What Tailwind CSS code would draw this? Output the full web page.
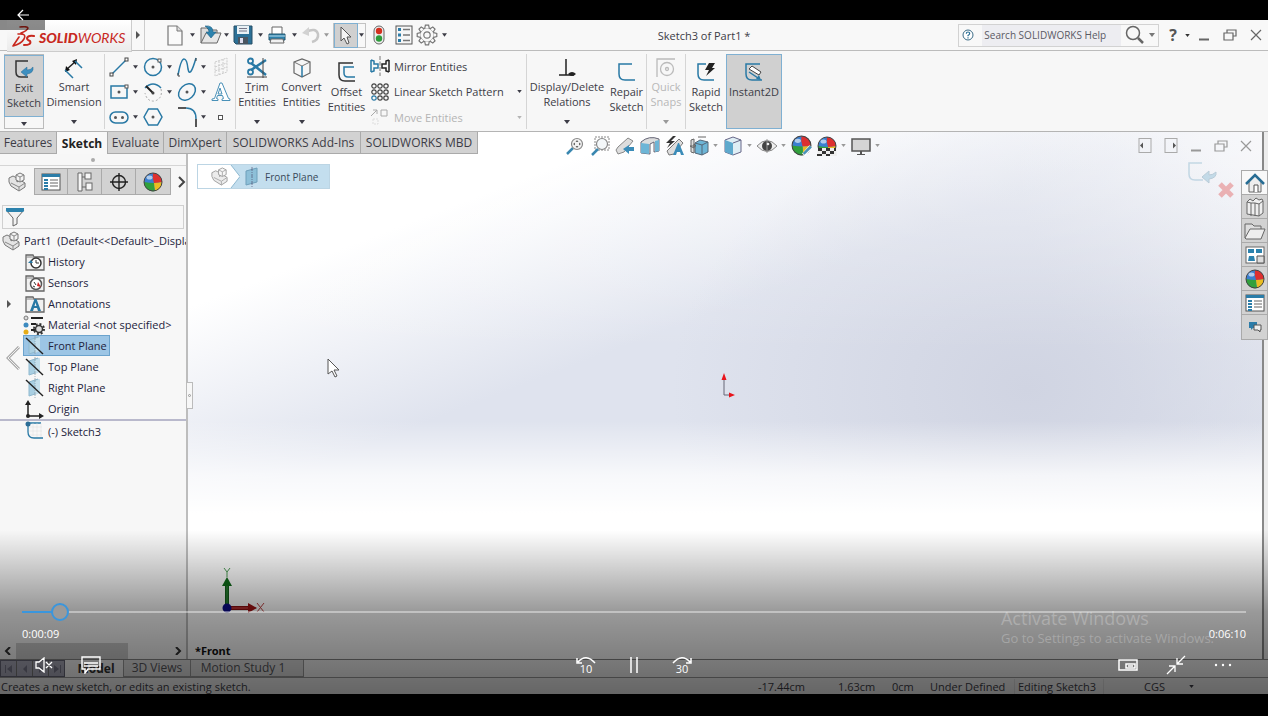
<!DOCTYPE html>
<html lang="en">
<head>
    <meta charset="UTF-8">
    <meta name="viewport" content="width=device-width, initial-scale=1.0">
    <title>SOLIDWORKS - Sketch3 of Part1</title>
    <script src="https://cdn.jsdelivr.net/npm/@tailwindcss/browser@4"></script>
</head>
<body class="bg-black">
    <!-- Shared icons -->
    <svg class="hidden">
        <symbol id="caret" viewBox="0 0 6 4"><path d="M0 0h6L3 4z" fill="currentColor"/></symbol>
        <symbol id="part" viewBox="0 0 20 20">
            <path d="M2 6l4-2 4 2v4l3-2 5 3v4l-6 4-8-5-2-4z" fill="#e4e4e4" stroke="#777" stroke-linejoin="round"/>
            <path d="M9 3l4-2 4 2v5l-4 2-4-2z" fill="#f4f4f4" stroke="#777" stroke-linejoin="round"/>
            <path d="M9 3l4 2 4-2M13 5v5M4 11l8 4 6-4M12 15v4" fill="none" stroke="#888"/>
        </symbol>
        <symbol id="plane" viewBox="0 0 20 20">
            <path d="M4 4l9-3v14l-9 3z" fill="#a9cfe2" stroke="#8fb9cf"/>
            <path d="M10 3l5-2v14l-5 2z" fill="#c4dfec"/>
            <path d="M10 0v20" stroke="#8899a5" stroke-width=".7" stroke-dasharray="4 1 1 1"/>
            <path d="M1 2l17 16" stroke="#222" stroke-width="1.4"/>
        </symbol>
        <symbol id="ball" viewBox="0 0 20 20">
            <circle cx="10" cy="10" r="9" fill="#3b7fd0"/>
            <path d="M10 1a9 9 0 0 1 9 9q-4 1-8 1Q9 6 10 1z" fill="#dd3030"/>
            <path d="M19 10a9 9 0 0 1-7 9q-1-4-1-8 4 0 8-1z" fill="#e9bd22"/>
            <path d="M1 10q5 1 10 1 0 4 1 8A9 9 0 0 1 1 10z" fill="#31a03c"/>
            <circle cx="10" cy="10" r="9" fill="none" stroke="#444"/>
            <ellipse cx="6.5" cy="5.5" rx="3" ry="2" fill="#fff" opacity=".6"/>
        </symbol>
        <symbol id="folder" viewBox="0 0 20 18">
            <path d="M1 17V2h7l1 2h10v13z" fill="#f1f1f1" stroke="#666" stroke-width="1.3"/>
            <path d="M1 4h9" stroke="#888"/>
        </symbol>
        <symbol id="proplist" viewBox="0 0 20 18">
            <rect x="1" y="1" width="18" height="16" fill="#fff" stroke="#555"/>
            <path d="M1 2.5h18" stroke="#2b7da8" stroke-width="3"/>
            <path d="M3 7h4M3 10h4M3 13h4M3 16h4" stroke="#2b7da8" stroke-width="2"/>
            <path d="M9 7h8M9 10h8M9 13h8" stroke="#666" stroke-width="1.2"/>
        </symbol>
        <symbol id="tooth" viewBox="0 0 22 22"><path d="M8.700 4.500L9.400 1.200h3.200l.700 3.300" fill="#f8f8f8" stroke="#777" stroke-width="1.200"/></symbol>
        <symbol id="restore" viewBox="0 0 14 12">
            <path d="M4 4V1h9v6h-3M1 4h9v7H1z" fill="none" stroke="currentColor" stroke-width="1.2"/>
        </symbol>
        <symbol id="close" viewBox="0 0 12 12"><path d="M1 1l10 10M11 1L1 11" stroke="currentColor" stroke-width="1.2"/></symbol>
        <symbol id="minus" viewBox="0 0 12 12"><path d="M1 10.5h10" stroke="currentColor" stroke-width="2"/></symbol>
    </svg>

    <div class="relative flex h-screen flex-col overflow-hidden bg-black font-['Open_Sans',sans-serif] text-[11px] leading-[15px] text-[#3c3c46]">
        <div class="h-5 shrink-0"></div>

        <!-- Title bar -->
        <header class="flex h-[31px] shrink-0 items-center border-b border-[#bcbcbc] bg-[#f8f8f8]">
            <div class="relative z-10 ml-[7px] mt-[2px] flex h-8 w-[125px] items-center border-r border-b border-[#ccc] bg-gradient-to-b from-white to-[#ebebeb] pt-1 pl-1">
                <svg class="h-6 w-7 shrink-0" viewBox="0 0 28 24" fill="none" stroke="#c8281e" stroke-width="1.6" stroke-linecap="round" stroke-linejoin="round">
                    <path d="M9 1q7-1 8 1-1 3-7 5M7 8q9-1 6 5-3 5-11 7l6-9"/>
                    <path d="M23 10q-6-1-7 2 0 2 3 3 2 4-6 4" stroke-width="2"/>
                </svg>
                <span class="font-['Lato',sans-serif] text-[14px] leading-4 text-[#c8281e] italic"><b class="font-black">SOLID</b>WORKS</span>
            </div>
            <button class="flex h-full w-[13px] items-center justify-center border-r border-[#ccc]" aria-label="Menu">
                <svg class="h-2 w-1" viewBox="0 0 4 8"><path d="M0 0l4 4-4 4z" fill="#555"/></svg>
            </button>
            <nav class="ml-5 flex items-center gap-1">
                <button class="flex w-[30px] items-center justify-between" aria-label="New">
                    <svg class="h-[21px] w-5" viewBox="0 0 20 21"><path d="M3 1h9l5 5v14H3z" fill="#fafafa" stroke="#777" stroke-width="1.2"/><path d="M12 1v5h5" fill="#ddd" stroke="#777"/></svg>
                    <svg class="h-1 w-[5px]"><use href="#caret"/></svg>
                </button>
                <button class="flex w-[30px] items-center justify-between" aria-label="Open">
                    <svg class="h-5 w-6" viewBox="0 0 24 20"><path d="M2 18V3h6l2 2h8v4" fill="#ddd" stroke="#666"/><path d="M2 18L7 8h15l-4 10z" fill="#e6e6e6" stroke="#666"/><path d="M6 1q8-1 8 6h3l-5 6-5-6h3q0-4-4-6z" fill="#2c82ad" stroke="#1d5f84" stroke-width=".6"/></svg>
                    <svg class="h-1 w-[5px]"><use href="#caret"/></svg>
                </button>
                <button class="flex w-[30px] items-center justify-between" aria-label="Save">
                    <svg class="h-5 w-5" viewBox="0 0 20 20"><path d="M1 1h18v18H3l-2-2z" fill="#2c7096" stroke="#274f66"/><path d="M4 1h12v8H4z" fill="#e9f1f5"/><path d="M6 3.5h8M6 6h8" stroke="#778"/><path d="M5 12h10v7H5z" fill="#4a5560"/><path d="M7 13h3v5H7z" fill="#dde"/></svg>
                    <svg class="h-1 w-[5px]"><use href="#caret"/></svg>
                </button>
                <button class="flex w-[30px] items-center justify-between" aria-label="Print">
                    <svg class="h-[18px] w-5" viewBox="0 0 20 18"><path d="M5 8V1h10v7" fill="#fff" stroke="#666"/><path d="M2 8h16v6H2z" fill="#2c82ad" stroke="#24566f"/><path d="M2 10h16" stroke="#bfe0ef"/><path d="M4 13h12l1 4H3z" fill="#f1f1f1" stroke="#666"/></svg>
                    <svg class="h-1 w-[5px]"><use href="#caret"/></svg>
                </button>
                <button class="flex w-[28px] items-center justify-between text-[#999]" aria-label="Undo">
                    <svg class="h-[18px] w-5" viewBox="0 0 20 18"><path d="M5 6q10-5 12 2 1 6-6 8" fill="none" stroke="#c6c6c6" stroke-width="2.5"/><path d="M1 7l7-6v9z" fill="#d2d2d2"/></svg>
                    <svg class="h-1 w-[5px]"><use href="#caret"/></svg>
                </button>
                <button class="flex h-[25px] w-[33px] items-center border border-[#c2c2c2]" aria-label="Select">
                    <span class="flex h-[25px] w-6 shrink-0 items-center justify-center border border-[#7fb0d2] bg-[#d0d0d0]">
                        <svg class="h-[19px] w-[14px]" viewBox="0 0 14 19"><path d="M2 1v14l3-3 3 6 2-1-2-6h4z" fill="#f4f4f4" stroke="#555"/></svg>
                    </span>
                    <svg class="ml-px h-1 w-[5px]"><use href="#caret"/></svg>
                </button>
                <button class="flex w-[18px] justify-center" aria-label="Rebuild">
                    <svg class="h-5 w-3" viewBox="0 0 12 20"><rect x="1" y="1" width="10" height="18" rx="5" fill="#eee" stroke="#666"/><circle cx="6" cy="6" r="3.2" fill="#d4301f"/><circle cx="6" cy="13.5" r="3.2" fill="#2d9c3a"/></svg>
                </button>
                <button class="flex w-6 justify-center" aria-label="File properties">
                    <svg class="h-5 w-[18px]" viewBox="0 0 18 20"><rect x="1" y="1" width="16" height="18" fill="#f6f6f6" stroke="#555"/><path d="M3 3h3v3H3zM3 8.5h3v3H3zM3 14h3v3H3z" fill="#2c7ca8"/><path d="M8 4.5h7M8 10h7M8 15.5h7" stroke="#777" stroke-width="1.5"/></svg>
                </button>
                <button class="-ml-1 flex w-[31px] items-center justify-between" aria-label="Options">
                    <svg class="h-[22px] w-[22px]" viewBox="0 0 22 22">
                        <circle cx="11" cy="11" r="7" fill="#f8f8f8" stroke="#777" stroke-width="1.2"/>
                        <use href="#tooth"/><use href="#tooth" transform="rotate(45 11 11)"/><use href="#tooth" transform="rotate(90 11 11)"/><use href="#tooth" transform="rotate(135 11 11)"/>
                        <use href="#tooth" transform="rotate(180 11 11)"/><use href="#tooth" transform="rotate(225 11 11)"/><use href="#tooth" transform="rotate(270 11 11)"/><use href="#tooth" transform="rotate(315 11 11)"/>
                        <circle cx="11" cy="11" r="3.2" fill="none" stroke="#777" stroke-width="1.2"/>
                    </svg>
                    <svg class="h-1 w-[5px]"><use href="#caret"/></svg>
                </button>
            </nav>
            <h1 class="ml-auto">Sketch3 of Part1 *</h1>
            <div class="ml-[208px] flex h-[23px] w-[201px] shrink-0 items-center border border-[#d2d2d2]">
                <svg class="mx-[3px] h-3 w-3 shrink-0" viewBox="0 0 12 12"><circle cx="6" cy="6" r="5" fill="#fff" stroke="#3a6b86"/><path d="M4.300 4.800q0-1.800 1.700-1.800t1.700 1.500Q7.700 5.500 6 6.500v.700M6 8.200v1.300" fill="none" stroke="#2c7096" stroke-width="1.200"/></svg>
                <label for="help-search" class="sr-only">Search SOLIDWORKS Help</label>
                <input id="help-search" type="text" placeholder="Search SOLIDWORKS Help" class="ml-[5px] h-full w-[139px] bg-[#ededf1] pl-[2px] text-[10px] placeholder:text-[#5a5a64]">
                <svg class="ml-1 h-5 w-5 shrink-0" viewBox="0 0 20 20" fill="none" stroke="#666"><circle cx="8" cy="8" r="6.5" stroke-width="1.5"/><path d="M13 13l5 5" stroke-width="2.5"/></svg>
                <svg class="ml-1 h-1 w-[6px] shrink-0 text-[#777]"><use href="#caret"/></svg>
            </div>
            <button class="ml-[10px] flex items-center gap-2 text-[16px] font-bold text-[#555]" aria-label="Help">?<svg class="h-[3px] w-[5px] text-[#333]"><use href="#caret"/></svg></button>
            <div class="mr-[6px] ml-2 flex items-center gap-[13px] text-[#666]">
                <button aria-label="Minimize"><svg class="h-3 w-3"><use href="#minus"/></svg></button>
                <button aria-label="Restore"><svg class="h-3 w-[14px]"><use href="#restore"/></svg></button>
                <button aria-label="Close"><svg class="h-3 w-3"><use href="#close"/></svg></button>
            </div>
        </header>

        <!-- Ribbon -->
        <div class="flex h-[81px] shrink-0 border-b border-[#b4b4b4] bg-[#f7f7f7] pt-[3px] pb-[2px] pl-1 text-center">
            <button class="flex w-10 flex-col items-center border border-[#bbb]">
                <span class="flex h-[62px] w-10 shrink-0 flex-col items-center border border-[#7fb0d2] bg-[#d0d0d0] pt-[3px]">
                    <svg class="h-[21px] w-5 shrink-0" viewBox="0 0 20 21"><path d="M14 2H2v11q0 5 5 5h7" fill="none" stroke="#333" stroke-width="1.5"/><path d="M19 8q1 6-6 7v3l-6-5 6-5v3q4 0 6-3z" fill="#3d8fc0" stroke="#2a6b93" stroke-width=".5"/></svg>
                    Exit<br>Sketch
                </span>
                <svg class="mt-[5px] h-1 w-[6px] shrink-0"><use href="#caret"/></svg>
            </button>
            <button class="flex w-[60px] flex-col items-center pt-1">
                <svg class="h-[21px] w-5 shrink-0" viewBox="0 0 20 21" fill="none"><path d="M2 12l10-9" stroke="#222" stroke-width="1.5"/><path d="M1 14l1-6 4 4zM13 1l-1 6-4-4z" fill="#111"/><path d="M11 3l7 7M1 12l8 8" stroke="#2979a5" stroke-width="1.5"/></svg>
                Smart<br>Dimension
                <svg class="mt-[11px] h-1 w-[6px] shrink-0"><use href="#caret"/></svg>
            </button>
            <!-- Sketch tools -->
            <div class="grid w-[132px] grid-cols-[34px_34px_34px_20px] content-between items-center border-x border-[#d5d5d5] pt-[3px] pb-[2px] pl-1">
                <button class="flex items-center gap-1" aria-label="Line"><svg class="h-5 w-5" viewBox="0 0 20 20"><path d="M2 18L17 3" stroke="#2979a5" stroke-width="1.5"/><rect x="1" y="16" width="3" height="3" fill="#fff" stroke="#444"/><rect x="16" y="1" width="3" height="3" fill="#fff" stroke="#444"/></svg><svg class="h-1 w-[5px]"><use href="#caret"/></svg></button>
                <button class="flex items-center gap-1" aria-label="Circle"><svg class="h-5 w-5" viewBox="0 0 20 20"><circle cx="10" cy="10" r="8.5" fill="none" stroke="#2979a5" stroke-width="1.5"/><circle cx="10" cy="10" r="1.5" fill="#555"/><rect x="15" y="2" width="3" height="3" fill="#fff" stroke="#555"/></svg><svg class="h-1 w-[5px]"><use href="#caret"/></svg></button>
                <button class="flex items-center gap-1" aria-label="Spline"><svg class="h-5 w-5" viewBox="0 0 20 20"><path d="M1 18Q4 2 7 2T11 12Q13 22 19 1" fill="none" stroke="#2979a5" stroke-width="1.5"/><path d="M1 16v3h2M19 1v3" stroke="#444" fill="none"/></svg><svg class="h-1 w-[5px]"><use href="#caret"/></svg></button>
                <button aria-label="Sketch plane"><svg class="h-5 w-5" viewBox="0 0 20 20" fill="none" stroke="#ccc" stroke-dasharray="2 1"><path d="M4 5l12-4v14L4 19zM8 4v14M12 2v14M4 10l12-4M4 14l12-4"/></svg></button>
                <button class="flex items-center gap-1" aria-label="Rectangle"><svg class="h-5 w-5" viewBox="0 0 20 20"><rect x="2" y="4" width="16" height="12" fill="none" stroke="#2979a5" stroke-width="1.5"/><circle cx="10" cy="10" r="1.5" fill="#555"/><rect x="16" y="3" width="3" height="3" fill="#fff" stroke="#555"/></svg><svg class="h-1 w-[5px]"><use href="#caret"/></svg></button>
                <button class="flex items-center gap-1" aria-label="Arc"><svg class="h-5 w-5" viewBox="0 0 20 20" fill="none"><path d="M2 6Q10-2 18 6" stroke="#2979a5" stroke-width="1.5"/><path d="M18 7q2 9-6 12Q4 20 2 11" stroke="#aaa" stroke-dasharray="2 2"/><path d="M3 4l7 7" stroke="#222" stroke-width="2"/><circle cx="10" cy="11" r="1.5" fill="#444"/></svg><svg class="h-1 w-[5px]"><use href="#caret"/></svg></button>
                <button class="flex items-center gap-1" aria-label="Ellipse"><svg class="h-5 w-5" viewBox="0 0 20 20"><ellipse cx="10" cy="10" rx="9.5" ry="7" transform="rotate(-42 10 10)" fill="none" stroke="#2979a5" stroke-width="1.5"/><circle cx="10" cy="10" r="1.5" fill="#555"/></svg><svg class="h-1 w-[5px]"><use href="#caret"/></svg></button>
                <button aria-label="Text"><svg class="h-5 w-5" viewBox="0 0 20 20"><path d="M1 18.500h6v-1.500l-1.500-.500 1-3h5l1 3-1.500.500v1.500h8v-1.500l-1.500-.500L11 1H9L3.500 16.500 1 17zM7 12l2-6 2 6z" fill="#fff" stroke="#4a91b8"/></svg></button>
                <button class="flex items-center gap-1" aria-label="Slot"><svg class="h-5 w-5" viewBox="0 0 20 20"><rect x="1" y="5" width="18" height="11" rx="5.5" fill="none" stroke="#2979a5" stroke-width="1.5"/><circle cx="6.5" cy="10.5" r="1.5" fill="#555"/><circle cx="13.5" cy="10.5" r="1.5" fill="#555"/></svg><svg class="h-1 w-[5px]"><use href="#caret"/></svg></button>
                <button aria-label="Polygon"><svg class="h-5 w-5" viewBox="0 0 20 20"><path d="M1 10l4.500-8h9l4.500 8-4.500 8h-9z" fill="none" stroke="#2979a5" stroke-width="1.5"/><circle cx="10" cy="10" r="1.5" fill="#555"/></svg></button>
                <button class="flex items-center gap-1" aria-label="Fillet"><svg class="h-5 w-5" viewBox="0 0 20 20" fill="none"><path d="M1 1h8M19 12v8" stroke="#222" stroke-width="1.5"/><path d="M9 1q10 0 10 11" stroke="#2979a5" stroke-width="1.5"/></svg><svg class="h-1 w-[5px]"><use href="#caret"/></svg></button>
                <button aria-label="Point"><svg class="h-5 w-5" viewBox="0 0 20 20"><rect x="7.5" y="8.5" width="4" height="4" fill="#fff" stroke="#555"/></svg></button>
            </div>
            <button class="flex w-[42px] flex-col items-center pt-[3px]">
                <svg class="h-[22px] w-[22px] shrink-0" viewBox="0 0 22 22" fill="none"><path d="M5 6l15 12M5 13L20 3" stroke="#2979a5" stroke-width="2.500"/><circle cx="4.500" cy="4" r="2.5" stroke="#2979a5" stroke-width="1.8"/><circle cx="4.500" cy="15" r="2.5" stroke="#2979a5" stroke-width="1.8"/><path d="M17 1v20M1 20h20" stroke="#444"/></svg>
                <span><u>T</u>rim<br>Entities</span>
                <svg class="mt-[11px] h-1 w-[6px] shrink-0"><use href="#caret"/></svg>
            </button>
            <button class="flex w-[47px] flex-col items-center pt-[3px]">
                <svg class="h-[22px] w-5 shrink-0" viewBox="0 0 20 22"><path d="M2 5l8-3 8 3v11l-8 4-8-4z" fill="#f6f6f6" stroke="#666" stroke-width="1.2"/><path d="M2 5l8 4 8-4" fill="none" stroke="#777"/><path d="M10 9v11" stroke="#2979a5" stroke-width="1.5"/></svg>
                Convert<br>Entities
                <svg class="mt-[11px] h-1 w-[6px] shrink-0"><use href="#caret"/></svg>
            </button>
            <button class="flex w-[43px] flex-col items-center pt-[7px]">
                <svg class="h-[23px] w-5 shrink-0" viewBox="0 0 20 23" fill="none"><path d="M16 2H2v12q0 6 6 6h10" stroke="#333" stroke-width="1.5"/><path d="M17 6H7v6q0 4 4 4h7" stroke="#2979a5" stroke-width="1.5"/></svg>
                Offset<br>Entities
            </button>
            <div class="flex w-[159px] flex-col justify-between border-r border-[#d5d5d5] pt-px pr-1 pb-px text-left">
                <button class="flex h-[22px] items-center gap-1 pl-[2px]"><svg class="h-5 w-5" viewBox="0 0 20 20" fill="none" stroke-width="1.5"><path d="M1 4v12M1 4l3 1v3h4v4H4v3l-3 1" stroke="#2979a5"/><path d="M19 4v12M19 4l-3 1v3h-4v4h4v3l3 1" stroke="#222"/><path d="M10 0v20" stroke="#777" stroke-width="1" stroke-dasharray="4 1.5"/></svg>Mirror Entities</button>
                <button class="flex h-[22px] items-center gap-1 pl-[2px]"><svg class="h-5 w-5" viewBox="0 0 20 20" fill="none" stroke="#444" stroke-width="1.2"><circle cx="4" cy="4" r="2.2"/><circle cx="10" cy="4" r="2.2"/><circle cx="16" cy="4" r="2.2"/><circle cx="4" cy="10" r="2.2"/><circle cx="10" cy="10" r="2.2"/><circle cx="16" cy="10" r="2.2"/><circle cx="4" cy="16" r="2.2" stroke="#2979a5"/><circle cx="10" cy="16" r="2.2"/><circle cx="16" cy="16" r="2.2"/></svg>Linear Sketch Pattern<svg class="ml-auto h-[3px] w-[5px]"><use href="#caret"/></svg></button>
                <button class="flex h-[22px] items-center gap-1 pl-[2px] text-[#b4b4b4]" disabled><svg class="h-5 w-5" viewBox="0 0 20 20" fill="none" stroke="#aaa"><path d="M1 9l6-6M3 3h4v4M11 3h6v6h-6z"/><path d="M3 12h5v5H3z" stroke="#ddd" stroke-dasharray="2 1"/></svg>Move Entities<svg class="ml-auto h-[3px] w-[5px]"><use href="#caret"/></svg></button>
            </div>
            <button class="flex w-20 flex-col items-center pt-[3px]">
                <svg class="h-[22px] w-5 shrink-0" viewBox="0 0 20 22"><path d="M9 2v16M2 18h15" stroke="#222" stroke-width="1.5"/><path d="M11 17q4-4 8 0-4 4-8 0" fill="#222"/></svg>
                Display/Delete<br>Relations
                <svg class="mt-[11px] h-1 w-[6px] shrink-0"><use href="#caret"/></svg>
            </button>
            <button class="flex w-10 flex-col items-center border-r border-[#d5d5d5] pt-[7px]">
                <svg class="h-[23px] w-5 shrink-0" viewBox="0 0 20 23" fill="none"><path d="M15 3H2v10q0 6 6 6h10" stroke="#2979a5" stroke-width="1.5"/></svg>
                Repair<br>Sketch
            </button>
            <button class="flex w-[39px] flex-col items-center border-r border-[#d5d5d5] pt-[3px] text-[#b8b8b8]" disabled>
                <svg class="h-[22px] w-5 shrink-0" viewBox="0 0 20 22" fill="none" stroke="#bbb" stroke-width="1.3"><path d="M1 20V2h18"/><circle cx="11" cy="12" r="6.5"/><circle cx="11" cy="12" r="1.5"/></svg>
                Quick<br>Snaps
                <svg class="mt-[11px] h-1 w-[6px] shrink-0 text-[#999]"><use href="#caret"/></svg>
            </button>
            <button class="flex w-10 flex-col items-center pt-[7px]">
                <svg class="h-[23px] w-5 shrink-0" viewBox="0 0 20 23" fill="none"><path d="M10 3H2v10q0 6 6 6h10" stroke="#2979a5" stroke-width="1.5"/><path d="M13 2h6l-3 5h3l-9 8 3-6h-4z" fill="#222"/></svg>
                Rapid<br>Sketch
            </button>
            <button class="flex w-14 flex-col items-center border border-[#7fb0d2] bg-[#d0d0d0] pt-[6px]">
                <svg class="h-[23px] w-5 shrink-0" viewBox="0 0 20 23" fill="none"><path d="M16 3H2v10q0 6 6 6h10" stroke="#2979a5" stroke-width="1.5"/><path d="M5 8l3-3 9 6-2 3z" fill="#fff" stroke="#444"/><path d="M5 11l9 6" stroke="#2979a5" stroke-width="1.5"/><path d="M17 19l-5-1 3-4z" fill="#2979a5"/></svg>
                Instant2D
            </button>
        </div>

        <!-- Workspace -->
        <main class="relative flex min-h-0 flex-1 flex-col bg-[linear-gradient(to_bottom,#ffffff00_53%,#ffffffc0_63%,#ffffff_70%),linear-gradient(to_bottom,#ffffff70_0%,#ffffff00_40%),radial-gradient(ellipse_28%_50%_at_81%_47%,#d0d4e2_0%,#d0d4e200_100%),radial-gradient(ellipse_20%_60%_at_100%_0%,#f2f3f7_0%,#f2f3f700_100%),linear-gradient(159deg,#ffffff_24%,#dfe3ee_44%)] bg-white">
            <div class="flex h-[22px] shrink-0 items-start">
                <nav class="flex h-[22px] shrink-0 border-b border-[#aaa] bg-[#d2d2d2] text-[12px] leading-[21px]">
                    <button class="w-[57px] border-r border-[#aaa]">Features</button>
                    <button class="h-[22px] w-[50px] bg-[#f8f8f8] font-bold text-[#222]">Sketch</button>
                    <button class="w-[57px] border-x border-[#aaa]">Evaluate</button>
                    <button class="w-[63px] border-r border-[#aaa]">DimXpert</button>
                    <button class="w-[134px] border-r border-[#aaa]">SOLIDWORKS Add-Ins</button>
                    <button class="w-[117px] border-r border-[#aaa]">SOLIDWORKS MBD</button>
                </nav>
                <!-- View toolbar -->
                <div class="ml-[87px] flex h-[27px] shrink-0 items-center gap-[5px] text-[#999]">
                    <button aria-label="Zoom to fit"><svg class="h-5 w-5" viewBox="0 0 20 20" fill="none"><path d="M2 18l6-6" stroke="#3a87b0" stroke-width="2.500"/><circle cx="12" cy="8" r="5.500" fill="#f2f2f2" stroke="#888" stroke-width="1.2"/><path d="M12 4l1.500 2h-3zM12 12l1.500-2h-3zM8 8l2-1.500v3zM16 8l-2-1.500v3z" fill="#666"/></svg></button>
                    <button aria-label="Zoom to area"><svg class="h-5 w-5" viewBox="0 0 20 20" fill="none"><rect x="5" y="1" width="14" height="13" stroke="#888" stroke-dasharray="2 1"/><path d="M2 19l6-6" stroke="#3a87b0" stroke-width="2.500"/><circle cx="12" cy="8" r="5.5" fill="#f4f8fa" stroke="#888" stroke-width="1.2"/></svg></button>
                    <button aria-label="Previous view"><svg class="h-5 w-5" viewBox="0 0 20 20"><path d="M3 11L13 2l5 3-9 11-6 2-2-4z" fill="#ddd" stroke="#888"/><path d="M19 11v4h-5v3l-6-5 6-4v2z" fill="#3b8cb8"/></svg></button>
                    <button aria-label="Section view"><svg class="h-5 w-5" viewBox="0 0 20 20"><path d="M1 6q8-7 18-3v12l-5 1V6l-4 2v10l-9-1z" fill="#ddd" stroke="#667"/><path d="M1 7l8 1v10l-8-1zM15 5l4-1v11l-4 1z" fill="#6db5d6"/></svg></button>
                    <button aria-label="Annotation views"><svg class="h-5 w-5" viewBox="0 0 20 20"><path d="M2 15L14 3l4 4-9 11-5 1z" fill="#ddd" stroke="#777"/><path d="M8 0L1 7h4l-3 5 8-7H6l5-5z" fill="#333"/><path d="M8 19l5-12h1l5 12h-3l-1-3h-3l-1 3z" fill="#3b8cb8"/></svg></button>
                    <button class="flex w-7 items-center justify-between" aria-label="View orientation"><svg class="h-5 w-5" viewBox="0 0 20 20"><path d="M5 7l5-3 8 2v10l-6 3-7-2z" fill="#6db5d6" stroke="#567"/><path d="M5 7l7 2v10M12 9l6-3" fill="none" stroke="#567"/><path d="M1 4v12l3 1V3zM8 1h8M0 10h6l-2-2v4z" fill="#ddd" stroke="#666"/></svg><svg class="h-[3px] w-[5px]"><use href="#caret"/></svg></button>
                    <button class="flex w-[29px] items-center justify-between" aria-label="Display style"><svg class="h-5 w-5" viewBox="0 0 20 20"><path d="M2 4l8-3 8 3v12l-8 3-8-3z" fill="#dfeef5" stroke="#668"/><path d="M2 4l8 3v12l-8-3z" fill="#5ea9cd"/><path d="M10 7l8-3" stroke="#668"/></svg><svg class="h-[3px] w-[5px]"><use href="#caret"/></svg></button>
                    <button class="flex w-[29px] items-center justify-between" aria-label="Hide or show items"><svg class="h-5 w-5" viewBox="0 0 20 20"><path d="M0 10Q10-1 20 10 10 21 0 10z" fill="#eee" stroke="#888"/><circle cx="10" cy="10" r="5" fill="#444"/><path d="M10 3v14" stroke="#999"/><circle cx="11" cy="8" r="1.3" fill="#eee"/></svg><svg class="h-[3px] w-[5px]"><use href="#caret"/></svg></button>
                    <button aria-label="Edit appearance"><svg class="h-[21px] w-[21px]" viewBox="0 0 20 20"><use href="#ball"/><path d="M12 19l7-8" stroke="#fff" stroke-width="4"/><path d="M12 18l7-7" stroke="#4b92b8" stroke-width="2.5"/></svg></button>
                    <button class="flex w-[29px] items-center justify-between" aria-label="Apply scene"><svg class="h-5 w-5" viewBox="0 0 20 20"><use href="#ball"/><path d="M1 12h18l1 8H0z" fill="#eee"/><path d="M1 12h4v3H1zM9 12h4v3H9zM17 12h2v3h-2zM5 15h4v3H5zM13 15h4v3h-4zM0 18h5v2H0zM9 18h4v2H9z" fill="#333"/></svg><svg class="h-[3px] w-[5px]"><use href="#caret"/></svg></button>
                    <button class="flex w-[29px] items-center justify-between" aria-label="View settings"><svg class="h-5 w-5" viewBox="0 0 20 20"><rect x="1" y="3" width="18" height="12" fill="#d5d5d5" stroke="#555" stroke-width="1.5"/><path d="M9 15h2v3h3v1H6v-1h3z" fill="#555"/></svg><svg class="h-[3px] w-[5px]"><use href="#caret"/></svg></button>
                </div>
                <div class="mr-[10px] ml-auto flex h-[27px] items-center gap-3 text-[#999]">
                    <button aria-label="Collapse left"><svg class="h-[15px] w-[14px]" viewBox="0 0 14 15"><rect x="1" y=".5" width="12" height="14" fill="none" stroke="#aaa"/><path d="M2 7.500l3-3v6z" fill="#555"/></svg></button>
                    <button aria-label="Collapse right"><svg class="h-[15px] w-[14px]" viewBox="0 0 14 15"><rect x="1" y=".5" width="12" height="14" fill="none" stroke="#aaa"/><path d="M12 7.500l-3-3v6z" fill="#555"/></svg></button>
                    <button aria-label="Minimize document"><svg class="h-3 w-3"><use href="#minus"/></svg></button>
                    <button aria-label="Restore document"><svg class="h-3 w-[14px]"><use href="#restore"/></svg></button>
                    <button aria-label="Close document"><svg class="h-3 w-3"><use href="#close"/></svg></button>
                </div>
                <div class="w-[6px] shrink-0 self-stretch border-l-2 border-[#888] bg-[#ececec]"></div>
            </div>

            <div class="flex min-h-0 flex-1">
                <!-- Feature manager -->
                <aside class="relative flex w-[188px] shrink-0 flex-col border-r-2 border-[#bdbdbd] bg-[#f7f7f7]">
                    <div class="flex h-[12px] shrink-0 items-center justify-center border-b border-[#d5d5d5]"><span class="size-1 rounded-full bg-[#aaa]"></span></div>
                    <div class="mt-[2px] flex h-[27px] shrink-0 items-center">
                        <button class="flex w-[34px] justify-center" aria-label="Feature tree"><svg class="h-5 w-5"><use href="#part"/></svg></button>
                        <button class="flex h-full w-[34px] items-center justify-center border border-[#aaa] bg-[#d2d2d2]" aria-label="Properties"><svg class="h-[18px] w-5"><use href="#proplist"/></svg></button>
                        <button class="flex h-full w-[34px] items-center justify-center border-y border-r border-[#aaa] bg-[#d2d2d2]" aria-label="Configurations"><svg class="h-5 w-[18px]" viewBox="0 0 18 20" fill="#f6f6f6" stroke="#666"><path d="M2 1h4v18H2zM6 5h4M6 15h4"/><rect x="9" y="1" width="6" height="6"/><rect x="10" y="11" width="6" height="7"/></svg></button>
                        <button class="flex h-full w-[34px] items-center justify-center border-y border-r border-[#aaa] bg-[#d2d2d2]" aria-label="Dimensions"><svg class="h-5 w-5" viewBox="0 0 20 20" fill="none" stroke="#222" stroke-width="1.4"><circle cx="10" cy="10" r="6.5"/><path d="M10 1v18M1 10h18"/></svg></button>
                        <button class="flex h-full w-[35px] items-center justify-center border-y border-r border-[#aaa] bg-[#d2d2d2]" aria-label="Display"><svg class="h-5 w-5"><use href="#ball"/></svg></button>
                        <button class="ml-auto" aria-label="More"><svg class="h-3 w-2" viewBox="0 0 8 12"><path d="M1 1l5 5-5 5" fill="none" stroke="#444" stroke-width="2"/></svg></button>
                    </div>
                    <div class="mx-[2px] mt-[10px] flex h-6 shrink-0 items-center border border-[#d0d0d0] pl-[2px]">
                        <svg class="h-5 w-5 shrink-0" viewBox="0 0 20 20"><path d="M1 3l7 8v8l4-2v-6l7-8z" fill="#f2f2f2" stroke="#666"/><path d="M1 1h18v3l-1 1H2L1 4z" fill="#2c82ad"/></svg>
                        <label for="tree-filter" class="sr-only">Filter</label>
                        <input id="tree-filter" type="text" class="w-full min-w-0">
                    </div>
                    <ul class="overflow-hidden pt-px pl-[23px] text-[11px] leading-[21px] whitespace-nowrap text-[#23233c]">
                        <li class="-ml-[22px] flex h-[21px] items-center gap-[3px]"><svg class="h-5 w-5 shrink-0"><use href="#part"/></svg>Part1 &nbsp;(Default&lt;&lt;Default&gt;_Display State 1&gt;)</li>
                        <li class="flex h-[21px] items-center gap-[3px] pl-[2px]"><svg class="h-[18px] w-5" viewBox="0 0 20 18"><use href="#folder"/><circle cx="11" cy="10" r="5" fill="#fff" stroke="#333" stroke-width="1.5"/><path d="M11 7v3h3" fill="none" stroke="#333"/><path d="M3 10h5l-2-3z" fill="#2979a5"/></svg>History</li>
                        <li class="flex h-[21px] items-center gap-[3px] pl-[2px]"><svg class="h-[18px] w-5" viewBox="0 0 20 18"><use href="#folder"/><circle cx="11" cy="10" r="5.5" fill="#fff" stroke="#555" stroke-width="1.5"/><path d="M11 11l-2-3M8 12l2 1" stroke="#333"/><path d="M13 8l3 5-4-1z" fill="#c22"/></svg>Sensors</li>
                        <li class="-ml-4 flex h-[21px] items-center gap-[3px]"><svg class="mr-[11px] h-2 w-1" viewBox="0 0 4 8"><path d="M0 0l4 4-4 4z" fill="#555"/></svg><svg class="h-[18px] w-5" viewBox="0 0 20 18"><use href="#folder"/><path d="M5 16l4.500-12h2L16 16h-3l-1-3H9l-1 3zM9.500 11h2l-1-3.500z" fill="#2979a5"/></svg>Annotations</li>
                        <li class="flex h-[21px] items-center gap-[3px]"><svg class="h-5 w-[22px]" viewBox="0 0 22 20"><circle cx="3" cy="3" r="2" fill="#ddd" stroke="#777"/><circle cx="3" cy="10" r="2.5" fill="#3c8abf"/><circle cx="3" cy="17" r="2.5" fill="#e5ac18"/><path d="M8 3h12M8 9h5M8 15h4" stroke="#222" stroke-width="2"/><circle cx="16" cy="14" r="3.5" fill="#ddd" stroke="#333" stroke-width="1.5"/><circle cx="16" cy="14" r="5" fill="none" stroke="#333" stroke-width="2" stroke-dasharray="2 1.9"/></svg>Material &lt;not specified&gt;</li>
                        <li class="flex h-[21px] w-[87px] items-center gap-[3px] border border-[#6ba3cd] bg-[#9cc5e5] pl-px"><svg class="h-5 w-5 shrink-0"><use href="#plane"/></svg>Front Plane</li>
                        <li class="flex h-[21px] items-center gap-[3px] pl-[2px]"><svg class="h-5 w-5"><use href="#plane"/></svg>Top Plane</li>
                        <li class="flex h-[21px] items-center gap-[3px] pl-[2px]"><svg class="h-5 w-5"><use href="#plane"/></svg>Right Plane</li>
                        <li class="flex h-[21px] items-center gap-[3px] pl-[2px]"><svg class="h-5 w-5" viewBox="0 0 20 20"><path d="M3 17V5M3 17h12" stroke="#222" stroke-width="1.5"/><path d="M3 1l3 5H0zM19 17l-5 3v-6z" fill="#222"/><circle cx="3" cy="17" r="2" fill="#222"/></svg>Origin</li>
                        <li class="-ml-[23px] flex h-[22px] items-center gap-[3px] border-t-2 border-[#b9b9cc] pl-[25px]"><svg class="h-5 w-5" viewBox="0 0 20 20" fill="none"><path d="M16 2H3v9q0 6 6 6h9" stroke="#2979a5" stroke-width="1.3"/><path d="M8 2v13M12 2v14M16 2v14M4 6h13M4 10h13M5 14h12" stroke="#ddd" stroke-width=".5"/><circle cx="3" cy="3" r="2.5" fill="#2b6d96"/></svg>(-) Sketch3</li>
                    </ul>
                    <button class="absolute top-[192px] left-[6px]" aria-label="Previous"><svg class="h-6 w-[14px]" viewBox="0 0 14 24"><path d="M13 1L2 12l11 11" fill="none" stroke="#aaa" stroke-width="3"/><path d="M13 1L2 12l11 11" fill="none" stroke="#eee"/></svg></button>
                    <button class="absolute top-[228px] -right-[7px] flex h-[27px] w-[7px] items-center justify-center border border-[#bbb] bg-[#f7f7f7]" aria-label="Collapse panel"><span class="size-[3px] rounded-full border border-[#999]"></span></button>
                    <div class="mt-auto flex h-[17px] shrink-0 items-center px-1">
                        <svg class="h-2 w-2" viewBox="0 0 8 8"><path d="M6 0L2 4l4 4" fill="none" stroke="#333" stroke-width="2"/></svg>
                        <div class="ml-1 h-4 w-28 bg-[#cdcdcd]"></div>
                        <svg class="ml-auto h-2 w-2" viewBox="0 0 8 8"><path d="M2 0l4 4-4 4" fill="none" stroke="#333" stroke-width="2"/></svg>
                    </div>
                </aside>

                <!-- Graphics area -->
                <section class="relative flex min-w-0 flex-1 flex-col justify-between border-r-2 border-[#888] pt-[10px] pl-[7px]">
                    <div class="ml-[2px] flex h-[25px] w-[133px] items-center border border-[#bcd5e4] bg-[#c3deee]">
                        <svg class="h-[23px] w-[42px] shrink-0" viewBox="0 0 42 23"><path d="M0 0h33l9 11.500-9 11.500H0z" fill="#fff"/><path d="M33 0l9 11.500-9 11.500" fill="none" stroke="#8fb9d2"/><svg x="12" y="2" width="19" height="19" opacity=".7"><use href="#part"/></svg></svg>
                        <svg class="ml-1 h-5 w-4" viewBox="0 0 16 20"><path d="M2 4l11-3v14L2 18z" fill="#8dbfd8" stroke="#6e9fba"/><path d="M8 0v20" stroke="#557" stroke-width=".7" stroke-dasharray="4 1 1 1"/></svg>
                        <span class="ml-[5px] pt-[2px] text-[10px] whitespace-nowrap text-[#3a4a5a]">Front Plane</span>
                    </div>
                    <b class="font-['Noto_Sans',sans-serif] leading-[16px] text-[#111]">*Front</b>

                    <svg class="absolute top-[204px] left-[139px] h-5 w-[14px]" viewBox="0 0 14 20"><path d="M1 1v15l4-3 3 6 2-1-3-6h5z" fill="#fff" stroke="#555"/></svg>
                    <svg class="absolute top-[219px] left-[49.5%] h-[26px] w-4" viewBox="0 0 16 26"><path d="M4 4v18h6" fill="none" stroke="#667"/><path d="M4 0l2.500 7h-5zM15 22l-6 2.500v-5z" fill="#e8141c"/></svg>
                    <svg class="absolute bottom-[42px] left-[32px] h-[52px] w-[46px]" viewBox="0 0 46 52"><path d="M7 43V16" stroke="#135c1b" stroke-width="4"/><path d="M7 43V16" stroke="#379d43"/><path d="M7 12l5 9H2z" fill="#0f6b19"/><path d="M7 43h22" stroke="#8b0f10" stroke-width="4"/><path d="M7 43h22" stroke="#e35050"/><path d="M37 43l-9 5V38z" fill="#a01112"/><circle cx="7" cy="43" r="4.5" fill="#0a0a88"/><path d="M4 3l3 4 3-4M7 7v5" fill="none" stroke="#4c9b55"/><path d="M37 38l7 9M44 38l-7 9" stroke="#bd4545"/></svg>
                    <div class="absolute top-[8px] right-[28px] flex items-start opacity-40">
                        <svg class="h-6 w-[30px]" viewBox="0 0 30 24"><path d="M14 1H1v11q0 6 6 6h8" fill="none" stroke="#7eaec9" stroke-width="1.5"/><path d="M28 10q1 6-7 7v4l-7-6 7-6v4q4 0 7-3z" fill="#7fb7d2" stroke="#6692aa"/></svg>
                        <svg class="mt-5 h-4 w-4" viewBox="0 0 16 16"><path d="M2 2l12 12M14 2L2 14" stroke="#e05050" stroke-width="5"/></svg>
                    </div>
                </section>
                <div class="w-1 shrink-0 bg-[#ececec]"></div>
            </div>

            <!-- Task pane -->
            <nav class="absolute top-[38px] right-0 flex w-[27px] flex-col divide-y divide-[#aaa] border border-[#aaa] bg-[#d2d2d2]">
                <button class="flex h-6 items-center justify-center bg-[#f8f8f8]" aria-label="Home"><svg class="h-5 w-5" viewBox="0 0 20 20"><path d="M4 9v10h12V9l-6-6z" fill="#eee" stroke="#666"/><path d="M9 19v-7h4v7" fill="#fff" stroke="#555"/><path d="M1 11l9-9 9 9" fill="none" stroke="#286d94" stroke-width="2.5"/></svg></button>
                <button class="flex h-6 items-center justify-center" aria-label="Design library"><svg class="h-5 w-5" viewBox="0 0 20 20" fill="#eee" stroke="#666"><path d="M2 5l3-3 3 2 3-3 3 2 3-1 1 2v12l-4 3-12-2z"/><path d="M2 5l4 1 4 0 4 1 4-3M6 6v13M10 6v13M14 7v12" fill="none"/></svg></button>
                <button class="flex h-6 items-center justify-center" aria-label="File explorer"><svg class="h-[18px] w-[22px]" viewBox="0 0 22 18"><path d="M1 16V2h7l2 2h7v3" fill="#ddd" stroke="#666"/><path d="M1 16L6 7h15l-4 10H2z" fill="#eee" stroke="#666"/></svg></button>
                <button class="flex h-6 items-center justify-center" aria-label="View palette"><svg class="h-[18px] w-5" viewBox="0 0 20 18"><rect x="1" y="1" width="18" height="16" fill="#fff" stroke="#666"/><path d="M3 3h6v4H3zM11 3h6v4h-6zM4 10h5l1 5H3z" fill="#2c82ad"/><path d="M12 10h7v7h-7z" fill="#ddd" stroke="#555"/></svg></button>
                <button class="flex h-6 items-center justify-center" aria-label="Appearances"><svg class="h-5 w-5"><use href="#ball"/></svg></button>
                <button class="flex h-6 items-center justify-center" aria-label="Custom properties"><svg class="h-[18px] w-5"><use href="#proplist"/></svg></button>
                <button class="flex h-6 items-center justify-center" aria-label="Forum"><svg class="h-3 w-[14px]" viewBox="0 0 14 12"><path d="M1 1h8v6H5L3 9V7H1z" fill="#2c7ca8"/><path d="M6 4h7v5h-1v2l-2-2H6z" fill="#eee" stroke="#555"/></svg></button>
            </nav>

            <!-- Document tabs -->
            <nav class="flex h-[18px] shrink-0 items-stretch border-t border-[#888] bg-[#f4f4f4] text-[12px] leading-4">
                <div class="flex w-[65px] divide-x divide-[#777] border border-[#667] bg-[#a8a8b8] text-[#77778a]">
                    <button class="flex flex-1 items-center justify-center" aria-label="First"><svg class="h-2 w-2" viewBox="0 0 8 8"><path d="M7 0v8L2 4zM0 0h1v8H0z" fill="currentColor"/></svg></button>
                    <button class="flex flex-1 items-center justify-center" aria-label="Back"><svg class="h-2 w-2" viewBox="0 0 8 8"><path d="M6 0v8L2 4z" fill="currentColor"/></svg></button>
                    <button class="flex flex-1 items-center justify-center" aria-label="Next"><svg class="h-2 w-2" viewBox="0 0 8 8"><path d="M2 0v8l4-4z" fill="currentColor"/></svg></button>
                    <button class="flex flex-1 items-center justify-center" aria-label="Last"><svg class="h-2 w-2" viewBox="0 0 8 8"><path d="M1 0v8l5-4zM7 0h1v8H7z" fill="currentColor"/></svg></button>
                </div>
                <button class="w-[58px] bg-[#f7f7f7] pl-1 font-bold text-[#333]">Model</button>
                <button class="w-[68px] border-x border-b border-[#999] bg-[#dedede] text-[#55555a]">3D Views</button>
                <button class="w-[113px] border-r border-b border-[#999] bg-[#dedede] pr-2 text-[#55555a]">Motion Study 1</button>
            </nav>
        </main>

        <!-- Status bar -->
        <footer class="flex h-[17px] shrink-0 items-center border-t border-[#999] bg-[#f2f2f2] pl-px whitespace-nowrap">
            <span>Creates a new sketch, or edits an existing sketch.</span>
            <span class="ml-auto w-[80px]">-17.44cm</span>
            <span class="w-[54px]">1.63cm</span>
            <span class="w-[38px]">0cm</span>
            <span class="w-[85px] border-r border-[#ddd]">Under Defined</span>
            <span class="w-[89px] border-r border-[#ddd] pl-[3px]">Editing Sketch3</span>
            <span class="w-[85px] pl-10">CGS</span>
            <svg class="mr-[74px] h-[3px] w-[5px]"><use href="#caret"/></svg>
        </footer>
        <div class="h-[22px] shrink-0"></div>

        <!-- Video player -->
        <button class="absolute top-0 left-0 z-20 flex h-[30px] w-[45px] items-center justify-center bg-black/45 text-white" aria-label="Back"><svg class="h-3 w-3" viewBox="0 0 12 12"><path d="M6 1L1 6l5 5M1 6h11" fill="none" stroke="currentColor" stroke-width="1.2"/></svg></button>
        <div class="absolute inset-x-0 bottom-[22px] z-20 flex h-[164px] flex-col justify-end bg-gradient-to-b from-black/0 via-black/40 to-black/58 px-[22px] text-white">
            <!-- Activation watermark -->
            <div class="absolute right-[54px] bottom-[46px] text-[13px] leading-5 whitespace-nowrap text-white/25">
                <p class="text-[18px]">Activate Windows</p>
                <p>Go to Settings to activate Windows.</p>
            </div>
            <label for="seek" class="sr-only">Seek</label>
            <input id="seek" type="range" min="0" max="370" value="9" class="relative h-0.5 w-full appearance-none bg-[linear-gradient(to_right,#3a96dd_3%,#ffffff66_3%)] [&::-webkit-slider-thumb]:size-[18px] [&::-webkit-slider-thumb]:appearance-none [&::-webkit-slider-thumb]:rounded-full [&::-webkit-slider-thumb]:border-2 [&::-webkit-slider-thumb]:border-[#3a96dd] [&::-webkit-slider-thumb]:bg-[#9a9a9a]">
            <div class="relative mt-3 flex h-4 items-center justify-between"><time>0:00:09</time><time>0:06:10</time></div>
            <div class="relative mt-[14px] mb-[19px] flex h-5 items-center justify-between">
                <div class="ml-[13px] flex items-center gap-7">
                    <button aria-label="Unmute"><svg class="h-4 w-[18px]" viewBox="0 0 18 16" fill="none" stroke="currentColor" stroke-width="1.3"><path d="M1 5h3l5-4v14l-5-4H1zM11 5l6 6M17 5l-6 6"/></svg></button>
                    <button aria-label="Subtitles"><svg class="h-[18px] w-5" viewBox="0 0 20 18" fill="none" stroke="currentColor" stroke-width="1.4"><path d="M1 1h18v12H7l-3 4v-4H1zM3 7h14M3 10h14"/></svg></button>
                </div>
                <div class="absolute left-1/2 flex -translate-x-1/2 items-center gap-8 text-[11px] leading-[10px]">
                    <button class="flex w-6 flex-col items-center" aria-label="Back 10 seconds"><svg class="h-2 w-5" viewBox="0 0 20 8" fill="none" stroke="currentColor" stroke-width="1.5"><path d="M1 2v5h5M2 6q8-9 17 1"/></svg>10</button>
                    <button aria-label="Pause"><svg class="h-4 w-2" viewBox="0 0 8 16"><path d="M1 0v16M7 0v16" stroke="currentColor" stroke-width="1.5"/></svg></button>
                    <button class="flex w-6 flex-col items-center" aria-label="Forward 30 seconds"><svg class="h-2 w-5" viewBox="0 0 20 8" fill="none" stroke="currentColor" stroke-width="1.5"><path d="M19 2v5h-5M18 6Q10-3 1 7"/></svg>30</button>
                </div>
                <div class="mr-[14px] flex items-center gap-7">
                    <button aria-label="Mini view"><svg class="h-3 w-5" viewBox="0 0 20 12" fill="none" stroke="currentColor" stroke-width="1.5"><path d="M1 1h18v10H1zM8 5h9v4H8zM10 7h5"/></svg></button>
                    <button aria-label="Exit full screen"><svg class="h-5 w-5" viewBox="0 0 20 20" fill="none" stroke="currentColor" stroke-width="1.3"><path d="M19 1l-8 8M11 3v6h6M1 19l8-8M3 11h6v6"/></svg></button>
                    <button aria-label="More options"><svg class="h-1 w-[18px]" viewBox="0 0 18 4" fill="currentColor"><circle cx="2" cy="2" r="1.2"/><circle cx="9" cy="2" r="1.2"/><circle cx="16" cy="2" r="1.2"/></svg></button>
                </div>
            </div>
        </div>
    </div>
</body>
</html>
